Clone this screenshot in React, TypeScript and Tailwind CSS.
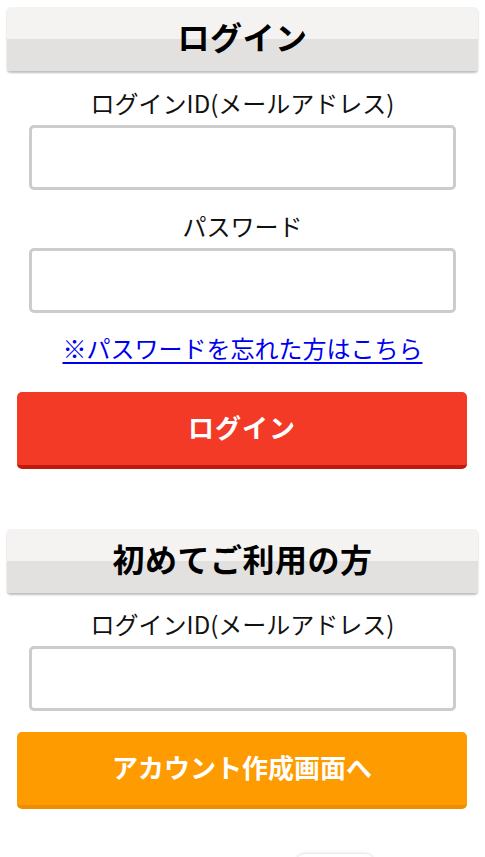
const jp = "font-['Noto_Sans_CJK_JP','Noto_Sans',sans-serif]";

function SectionHeader({ title }: { title: string }) {
  return (
    <div className="mx-[7px] h-[64px] pb-[6px] rounded-[4px] bg-[linear-gradient(to_bottom,#f4f3f1_0%,#f4f3f1_50%,#e3e1df_50%,#e3e1df_100%)] shadow-[0_2px_2px_rgba(0,0,0,0.25)] flex items-center justify-center">
      <h2 className="text-[32px] font-bold text-black leading-none tracking-[0.5px]">{title}</h2>
    </div>
  );
}

function Field({ label, type = "text", className = "" }: { label: string; type?: string; className?: string }) {
  return (
    <div className={className}>
      <label className="block text-center text-[24px] leading-[36px] text-[#111]">{label}</label>
      <input
        type={type}
        className="mt-[4px] mx-[29px] block w-[427px] h-[65px] rounded-[5px] border-[3px] border-[#cccccc] bg-white outline-none px-3 text-[20px]"
      />
    </div>
  );
}

export default function App() {
  return (
    <div className={`${jp} bg-white w-[485px] min-h-[857px] pt-[7px] overflow-hidden`}>
      {/* Login */}
      <SectionHeader title="ログイン" />
      <Field label="ログインID(メールアドレス)" className="mt-[14px]" />
      <Field label="パスワード" type="password" className="mt-[18px]" />
      <div className="mt-[17px] text-center leading-[36px]">
        <a href="#" className="text-[24px] text-[#0000ee] underline underline-offset-[4px] decoration-[2px]">
          ※パスワードを忘れた方はこちら
        </a>
      </div>
      <button className="mt-[23px] mx-[17px] w-[450px] h-[77px] pb-[4px] rounded-[5px] bg-[#f33a26] border-b-[4px] border-[#c01a0d] text-white text-[26px] font-bold tracking-[1px]">
        ログイン
      </button>

      {/* New user */}
      <div className="mt-[60px]">
        <SectionHeader title="初めてご利用の方" />
      </div>
      <Field label="ログインID(メールアドレス)" className="mt-[13px]" />
      <button className="mt-[21px] mx-[17px] w-[450px] h-[77px] pb-[4px] rounded-[5px] bg-[#fe9b00] border-b-[4px] border-[#ef8c00] text-white text-[26px] font-bold">
        アカウント作成画面へ
      </button>

      <div className="mt-[45px] flex justify-end pr-[110px]">
        <div className="w-[80px] h-[20px] rounded-t-[10px] bg-white shadow-[0_-1px_3px_rgba(0,0,0,0.12)]" />
      </div>
    </div>
  );
}
